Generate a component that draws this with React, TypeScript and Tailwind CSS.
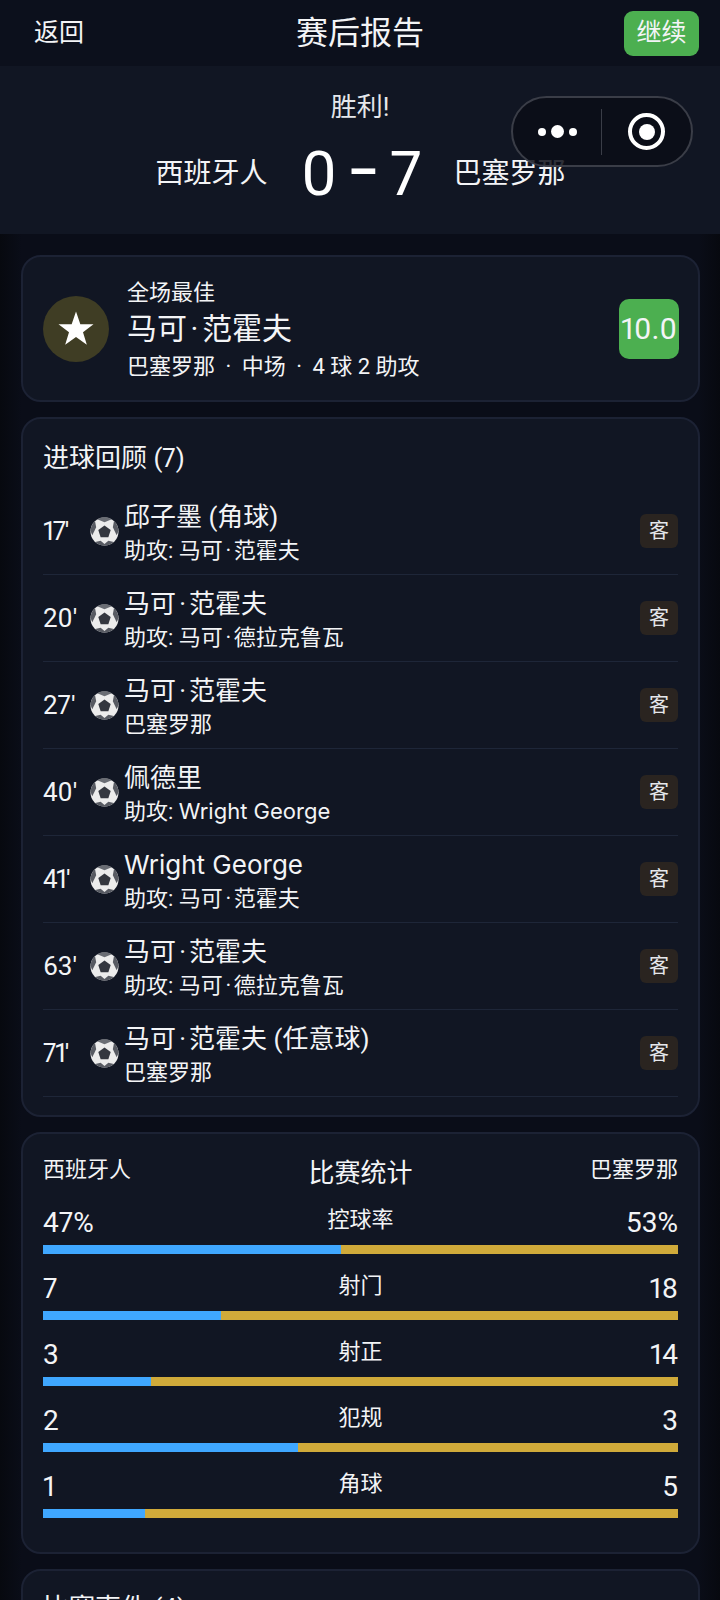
import type { ReactNode } from "react";

const font = { fontFamily: '"Roboto", "Noto Sans CJK SC", sans-serif' };

const goals = [
  { t: "17'", tight: true, name: "邱子墨 (角球)", sub: "助攻: 马可·范霍夫" },
  { t: "20'", tight: false, name: "马可·范霍夫", sub: "助攻: 马可·德拉克鲁瓦" },
  { t: "27'", tight: false, name: "马可·范霍夫", sub: "巴塞罗那" },
  { t: "40'", tight: false, name: "佩德里", sub: "助攻: Wright George" },
  { t: "41'", tight: true, name: "Wright George", sub: "助攻: 马可·范霍夫" },
  { t: "63'", tight: false, name: "马可·范霍夫", sub: "助攻: 马可·德拉克鲁瓦" },
  { t: "71'", tight: true, name: "马可·范霍夫 (任意球)", sub: "巴塞罗那" },
];

const stats = [
  { label: "控球率", l: "47%", r: "53%", p: 47 },
  { label: "射门", l: "7", r: "18", p: 28 },
  { label: "射正", l: "3", r: "14", p: 17.05 },
  { label: "犯规", l: "2", r: "3", p: 40.1 },
  { label: "角球", l: "1", r: "5", p: 16.1 },
];

function Rich({ text }: { text: string }): ReactNode {
  return text.split(/(·|Wright George)/).map((part, i) =>
    part === "·" ? (
      <span key={i} className="mx-[0.12em]">·</span>
    ) : part === "Wright George" ? (
      <span key={i} style={{ fontFamily: '"Inter", sans-serif' }}>{part}</span>
    ) : (
      part
    )
  );
}

function Ball() {
  return (
    <svg width="29" height="29" viewBox="0 0 30 30" className="shrink-0">
      <circle cx="15" cy="15" r="14.5" fill="#ececec" />
      <path d="M15 8.8l6.4 4.6-2.4 7.6h-8l-2.4-7.6z" fill="#34373f" />
      <path d="M7.5 2.2A14.5 14.5 0 0 1 22.5 2.2L15 5.4z" fill="#6a6d74" />
      <path d="M.6 14A14.5 14.5 0 0 1 5.2 4.2L6.4 10.6 2.4 19A14.5 14.5 0 0 1 .6 14z" fill="#585b63" />
      <path d="M29.4 14A14.5 14.5 0 0 0 24.8 4.2L23.6 10.6 27.6 19A14.5 14.5 0 0 0 29.4 14z" fill="#585b63" />
      <path d="M5.4 25.8L11 24.6 15 28 19 24.6 24.6 25.8A14.5 14.5 0 0 1 15 29.5 14.5 14.5 0 0 1 5.4 25.8z" fill="#585b63" />
    </svg>
  );
}

export default function App() {
  return (
    <div
      style={font}
      className="relative w-[720px] h-[1600px] overflow-hidden bg-[linear-gradient(90deg,#07090f,#0a0d18_3%,#0a0d18_97%,#07090f)] text-white [font-variant-numeric:proportional-nums]"
    >
      <header className="h-[66px] bg-[#0c101c] flex items-center justify-between pl-[34px] pr-[21px]">
        <span className="text-[25px] text-[#f3f4f6]">返回</span>
        <span className="text-[32px] text-[#f3f4f6] ml-[12px]">赛后报告</span>
        <span className="w-[75px] h-[45px] rounded-[9px] bg-[#4caf50] flex items-center justify-center text-[25px] text-[#f3f4f6]">继续</span>
      </header>

      <section className="h-[168px] bg-[#111623] flex flex-col items-center">
        <div className="text-[26px] leading-[36px] mt-[23px] text-[#e5e7eb]">胜利!</div>
        <div className="flex items-center mt-[14px] h-[70px] ml-[1px]">
          <span className="text-[28px] text-[#f3f4f6]">西班牙人</span>
          <span className="text-[62px] ml-[32px] mr-[30px] leading-none flex items-center w-[124px] justify-center">
            <span>0</span>
            <span className="inline-block scale-x-[1.6] scale-y-[1.2] -translate-y-[5px] mx-[18px]">-</span>
            <span>7</span>
          </span>
          <span className="text-[28px] text-[#f3f4f6]">巴塞罗那</span>
        </div>
      </section>

      <div className="absolute left-[511px] top-[96px] w-[182px] h-[71px] rounded-full border-2 border-[#3a3d47] bg-[#0b0d16]/85 flex items-center">
        <div className="w-[88px] flex items-center justify-center gap-[5px]">
          <i className="w-[8px] h-[8px] rounded-full bg-white" />
          <i className="w-[13px] h-[13px] rounded-full bg-white" />
          <i className="w-[8px] h-[8px] rounded-full bg-white" />
        </div>
        <div className="w-px h-[46px] bg-[#3a3d47]" />
        <div className="flex-1 flex items-center justify-center">
          <div className="w-[37px] h-[37px] rounded-full border-[4px] border-white flex items-center justify-center">
            <i className="w-[16px] h-[16px] rounded-full bg-white" />
          </div>
        </div>
      </div>

      <main className="pl-[21px] pr-[20px] pt-[21px] flex flex-col gap-[15px]">
        <section className="h-[147px] rounded-[20px] border-2 border-[#1c2234] bg-[#111623] flex items-center pl-[20px] pr-[19px]">
          <div className="w-[66px] h-[66px] rounded-full bg-[#3f3d24] flex items-center justify-center shrink-0">
            <svg width="40" height="40" viewBox="0 0 24 24" fill="#fff"><path d="M12 1.5L14.6 9.1 22.5 9.1 16.2 13.9 18.5 21.4 12 16.8 5.5 21.4 7.8 13.9 1.5 9.1 9.4 9.1z" /></svg>
          </div>
          <div className="ml-[18px] flex-1 text-[#f3f4f6] pt-[4px]">
            <div className="text-[22px] leading-[30px]">全场最佳</div>
            <div className="text-[30px] leading-[42px]"><Rich text="马可·范霍夫" /></div>
            <div className="text-[22px] leading-[33px]">
              巴塞罗那<span className="mx-[5px]"> · </span>中场<span className="mx-[5px]"> · </span>4 球 2 助攻
            </div>
          </div>
          <div className="w-[60px] h-[60px] rounded-[10px] bg-[#4caf50] flex items-center justify-center text-[30px] text-[#f3f4f6]">10.0</div>
        </section>

        <section className="h-[700px] rounded-[20px] border-2 border-[#1c2234] bg-[#111623] px-[20px]">
          <div className="text-[26px] leading-[36px] mt-[21px] mb-[12px] text-[#f3f4f6]">进球回顾 (7)</div>
          {goals.map((g) => (
            <div key={g.t} className="h-[87px] border-b border-[#1e2638] flex items-center">
              <span className={g.tight ? "w-[47px] text-[26px] text-[#f3f4f6] tracking-[-1.5px]" : "w-[47px] text-[26px] text-[#f3f4f6]"}>{g.t}</span>
              <Ball />
              <div className="ml-[5px] flex-1 text-[#f3f4f6] pt-[3px]">
                <div className="text-[26px] leading-[36px]"><Rich text={g.name} /></div>
                <div className="text-[22px] leading-[31px]"><Rich text={g.sub} /></div>
              </div>
              <span className="w-[38px] h-[34px] rounded-[6px] bg-[#2a2420] flex items-center justify-center text-[20px] text-[#e5e7eb]">客</span>
            </div>
          ))}
        </section>

        <section className="h-[422px] rounded-[20px] border-2 border-[#1c2234] bg-[#111623] px-[20px]">
          <div className="grid grid-cols-[1fr_auto_1fr] mt-[18px] h-[40px] text-[#f3f4f6]">
            <span className="text-[22px] leading-[36px]">西班牙人</span>
            <span className="text-[26px] leading-[42px]">比赛统计</span>
            <span className="text-[22px] leading-[36px] text-right">巴塞罗那</span>
          </div>
          <div className="flex flex-col gap-[17px] mt-[13px]">
            {stats.map((s) => (
              <div key={s.label} className="h-[49px] flex flex-col justify-between">
                <div className="grid grid-cols-[1fr_auto_1fr] text-[#f3f4f6] h-[38px]">
                  <span className="text-[28px] leading-[36px]">{s.l}</span>
                  <span className="text-[22px] leading-[30px]">{s.label}</span>
                  <span className="text-[28px] leading-[36px] text-right">{s.r}</span>
                </div>
                <div className="h-[9px] flex bg-[#d0aa3a]">
                  <div className="bg-[#3fa7ff]" style={{ width: `${s.p}%` }} />
                </div>
              </div>
            ))}
          </div>
        </section>

        <section className="h-[200px] rounded-[20px] border-2 border-[#1c2234] bg-[#111623] px-[20px]">
          <div className="text-[26px] leading-[36px] mt-[19px] text-[#f3f4f6]">比赛事件 (4)</div>
        </section>
      </main>
    </div>
  );
}
